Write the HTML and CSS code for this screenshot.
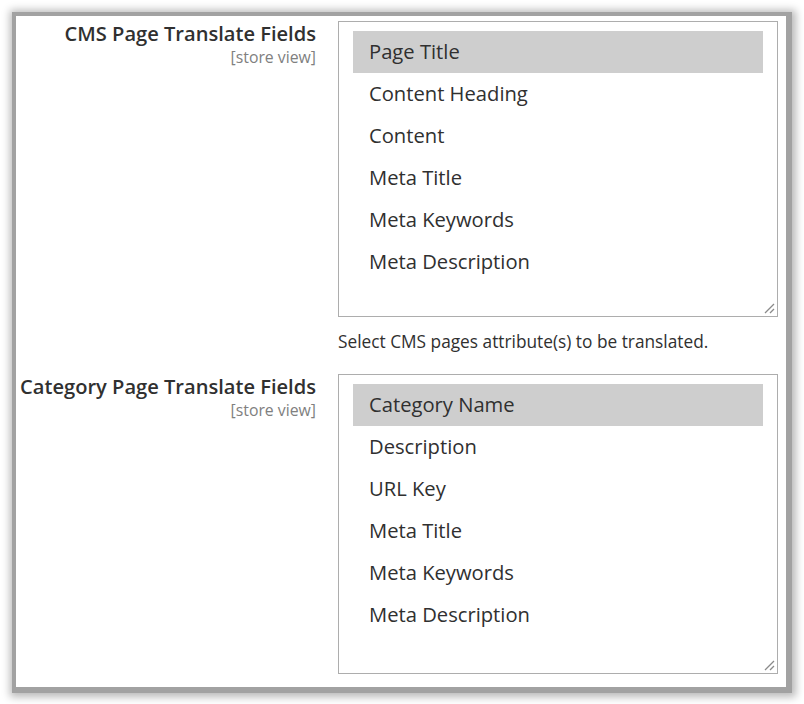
FILE: index.html
```html
<!DOCTYPE html>
<html>
<head>
<meta charset="utf-8">
<link rel="stylesheet" href="styles.css">
</head>
<body>
<div class="panel">
  <div class="row">
    <div class="label">
      <div class="label-title">CMS Page Translate Fields</div>
      <div class="scope">[store view]</div>
    </div>
    <div class="control">
      <div class="listbox lb1">
        <div class="option selected">Page Title</div>
        <div class="option">Content Heading</div>
        <div class="option">Content</div>
        <div class="option">Meta Title</div>
        <div class="option">Meta Keywords</div>
        <div class="option">Meta Description</div>
        <svg class="grip" width="12" height="12" viewBox="0 0 12 12"><path d="M11 2 L2 11 M11 7 L7 11" stroke="#8a8a8a" stroke-width="1.3" fill="none"/></svg>
      </div>
      <div class="note">Select CMS pages attribute(s) to be translated.</div>
    </div>
  </div>
  <div class="row">
    <div class="label">
      <div class="label-title">Category Page Translate Fields</div>
      <div class="scope">[store view]</div>
    </div>
    <div class="control">
      <div class="listbox lb2">
        <div class="option selected">Category Name</div>
        <div class="option">Description</div>
        <div class="option">URL Key</div>
        <div class="option">Meta Title</div>
        <div class="option">Meta Keywords</div>
        <div class="option">Meta Description</div>
        <svg class="grip" width="12" height="12" viewBox="0 0 12 12"><path d="M11 2 L2 11 M11 7 L7 11" stroke="#8a8a8a" stroke-width="1.3" fill="none"/></svg>
      </div>
    </div>
  </div>
</div>
</body>
</html>
```

FILE: styles.css
```css
html, body {
  margin: 0;
  padding: 0;
  background: #ffffff;
}
body {
  font-family: "Open Sans", "Liberation Sans", sans-serif;
  color: #303030;
  width: 804px;
  height: 704px;
  overflow: hidden;
}
.panel {
  margin: 16px 0 0 16px;
  width: 770px;
  height: 671px;
  box-sizing: border-box;
  padding-top: 5px;
  background: #ffffff;
  box-shadow: 1px 1px 0 5px #a2a2a2, 2px 2px 8px 8px rgba(0, 0, 0, 0.28);
}
.row {
  display: grid;
  grid-template-columns: 300px 440px;
  column-gap: 22px;
}
.row + .row {
  margin-top: 21px;
}
.label {
  text-align: right;
}
.label-title {
  font-size: 20.1px;
  font-weight: 600;
  line-height: 26px;
  color: #303030;
}
.scope {
  font-size: 15.8px;
  line-height: 20px;
  color: #808080;
}
.listbox {
  position: relative;
  box-sizing: border-box;
  border: 1px solid #adadad;
  padding: 9px 14px 0 14px;
  background: #ffffff;
}
.lb1 {
  height: 296px;
}
.lb2 {
  height: 300px;
}
.option {
  height: 42px;
  line-height: 41px;
  padding-left: 16px;
  font-size: 20.2px;
  color: #303030;
}
.option.selected {
  background: #cecece;
}
.grip {
  position: absolute;
  right: 2px;
  bottom: 2px;
}
.note {
  margin-top: 14px;
  font-size: 17.3px;
  line-height: 22px;
  color: #303030;
}
```
